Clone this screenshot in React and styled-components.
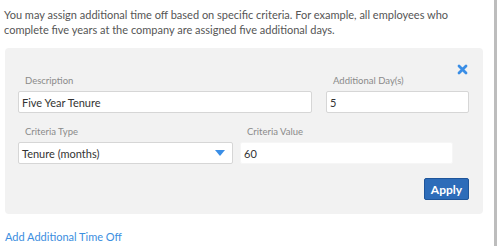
import React from "react";
import styled, { createGlobalStyle } from "styled-components";

const Global = createGlobalStyle`
  html, body { margin: 0; padding: 0; background: #fff; }
  body { font-family: "Lato", "Liberation Sans", sans-serif; }
`;

const Page = styled.div`
  display: flex;
  height: 246px;
  width: 498px;
  overflow: hidden;
`;

const Main = styled.div`
  width: 494px;
  display: flex;
  flex-direction: column;
`;

const Edge = styled.div`
  width: 3px;
  background: #bdbdbd;
`;

const Intro = styled.p`
  margin: 0;
  padding: 7px 0 0 4px;
  font-size: 11px;
  line-height: 15px;
  color: #555;
  white-space: nowrap;
`;

const Panel = styled.div`
  margin: 11px 0 0 5px;
  width: 478px;
  height: 166px;
  box-sizing: border-box;
  background: #f2f2f2;
  border-radius: 4px;
  padding: 16px 14px 0 13px;
  display: flex;
  flex-direction: column;
`;

const CloseRow = styled.div`
  display: flex;
  justify-content: flex-end;
  padding-right: 1px;
  height: 10px;
`;

const Row = styled.div`
  display: flex;
  gap: ${(p) => p.$gap}px;
  margin-top: ${(p) => p.$top}px;
`;

const Field = styled.div`
  display: flex;
  flex-direction: column;
  width: ${(p) => p.$w}px;
`;

const Label = styled.label`
  font-size: 9.5px;
  line-height: 12px;
  color: #8a8a8a;
  padding-left: ${(p) => p.$indent || 7}px;
  margin-bottom: 4px;
`;

const Input = styled.div`
  height: 22px;
  box-sizing: border-box;
  background: #fff;
  border: 1px solid ${(p) => (p.$flat ? "#f6f6f6" : "#d6d6d6")};
  border-radius: 2px;
  padding: 0 3px;
  display: flex;
  align-items: center;
  justify-content: space-between;
  font-size: 11px;
  color: #333;
`;

const Caret = styled.span`
  width: 0;
  height: 0;
  border-left: 5px solid transparent;
  border-right: 5px solid transparent;
  border-top: 6px solid #3a8ee6;
  margin-right: 4px;
`;

const Footer = styled.div`
  display: flex;
  justify-content: flex-end;
  margin-top: 14px;
`;

const Button = styled.button`
  width: 45px;
  height: 22px;
  box-sizing: border-box;
  background: #2d6cb9;
  border: 1px solid #1f559a;
  border-radius: 2px;
  color: #fff;
  font-family: "Lato", "Liberation Sans", sans-serif;
  font-weight: 700;
  font-size: 12px;
  padding: 0;
`;

const Link = styled.a`
  margin: 16px 0 0 5px;
  font-size: 11px;
  line-height: 14px;
  color: #3b8ee0;
  text-decoration: none;
`;

const CloseIcon = () => (
  <svg width="11" height="11" viewBox="0 0 11 11">
    <path d="M2 2 L9 9 M9 2 L2 9" stroke="#3a8ee6" strokeWidth="2.8" strokeLinecap="round" />
  </svg>
);

export default function App() {
  return (
    <>
      <Global />
      <Page>
        <Main>
          <Intro>
            You may assign additional time off based on specific criteria. For example, all employees who
            <br />
            complete five years at the company are assigned five additional days.
          </Intro>
          <Panel>
            <CloseRow>
              <CloseIcon />
            </CloseRow>
            <Row $gap={14} $top={1}>
              <Field $w={294}>
                <Label>Description</Label>
                <Input>Five Year Tenure</Input>
              </Field>
              <Field $w={143}>
                <Label>Additional Day(s)</Label>
                <Input>5</Input>
              </Field>
            </Row>
            <Row $gap={7} $top={13}>
              <Field $w={215}>
                <Label>Criteria Type</Label>
                <Input>
                  Tenure (months)
                  <Caret />
                </Input>
              </Field>
              <Field $w={213}>
                <Label>Criteria Value</Label>
                <Input $flat>60</Input>
              </Field>
            </Row>
            <Footer>
              <Button>Apply</Button>
            </Footer>
          </Panel>
          <Link href="#">Add Additional Time Off</Link>
        </Main>
        <Edge />
      </Page>
    </>
  );
}
